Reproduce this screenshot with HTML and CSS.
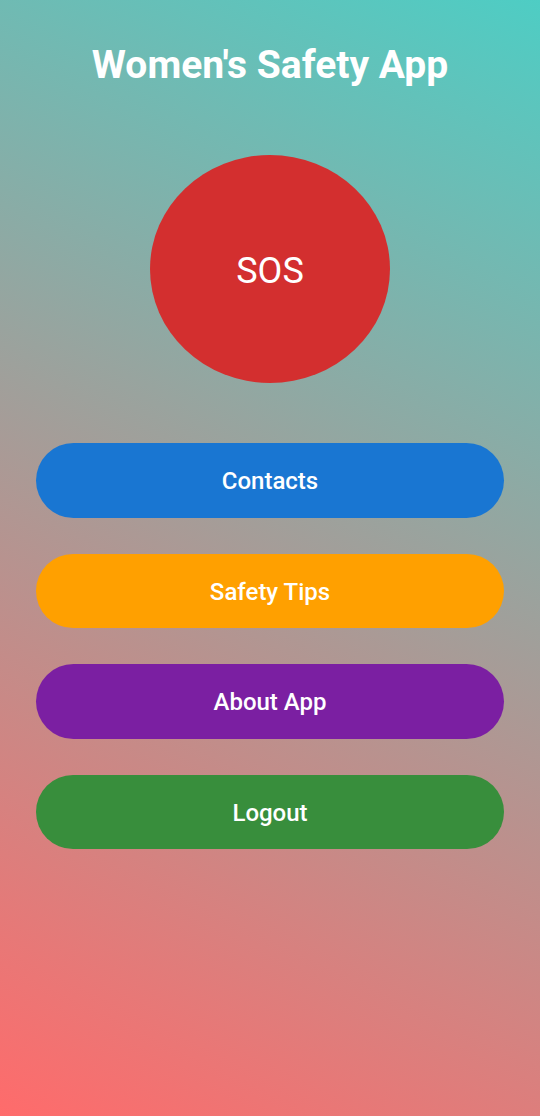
FILE: index.html
```html
<!DOCTYPE html>
<html lang="en">
<head>
<meta charset="utf-8">
<title>Women's Safety App</title>
<link rel="stylesheet" href="styles.css">
</head>
<body>
<main class="screen">
  <h1 class="title">Women's Safety App</h1>
  <button class="sos">SOS</button>
  <nav class="menu">
    <button class="btn btn-contacts">Contacts</button>
    <button class="btn btn-tips">Safety Tips</button>
    <button class="btn btn-about">About App</button>
    <button class="btn btn-logout">Logout</button>
  </nav>
</main>
</body>
</html>
```
FILE: styles.css
```css
html, body {
  margin: 0;
  padding: 0;
}
body {
  width: 540px;
  height: 1116px;
  overflow: hidden;
  font-family: Roboto, "Noto Sans", sans-serif;
  background: linear-gradient(25.8deg, #ff6b6b, #4ecdc4);
}
.screen {
  display: flex;
  flex-direction: column;
  align-items: center;
  padding: 42px 36px 0;
}
.title {
  margin: 0;
  font-size: 39px;
  line-height: 46px;
  font-weight: 700;
  color: #ffffff;
}
.sos {
  margin-top: 67px;
  width: 240px;
  height: 228px;
  border: none;
  border-radius: 50%;
  background: #d32f2f;
  color: #ffffff;
  font-family: Roboto, sans-serif;
  font-size: 36px;
  font-weight: 400;
  padding: 3px 0 0;
}
.menu {
  margin-top: 60px;
  width: 100%;
  display: flex;
  flex-direction: column;
  gap: 36px;
}
.btn {
  height: 74.5px;
  border: none;
  border-radius: 38px;
  color: #ffffff;
  font-family: Roboto, sans-serif;
  font-size: 24px;
  font-weight: 500;
  padding: 2px 0 0;
}
.btn-contacts { background: #1976d2; }
.btn-tips { background: #ffa000; }
.btn-about { background: #7b1fa2; }
.btn-logout { background: #388e3c; }
```
